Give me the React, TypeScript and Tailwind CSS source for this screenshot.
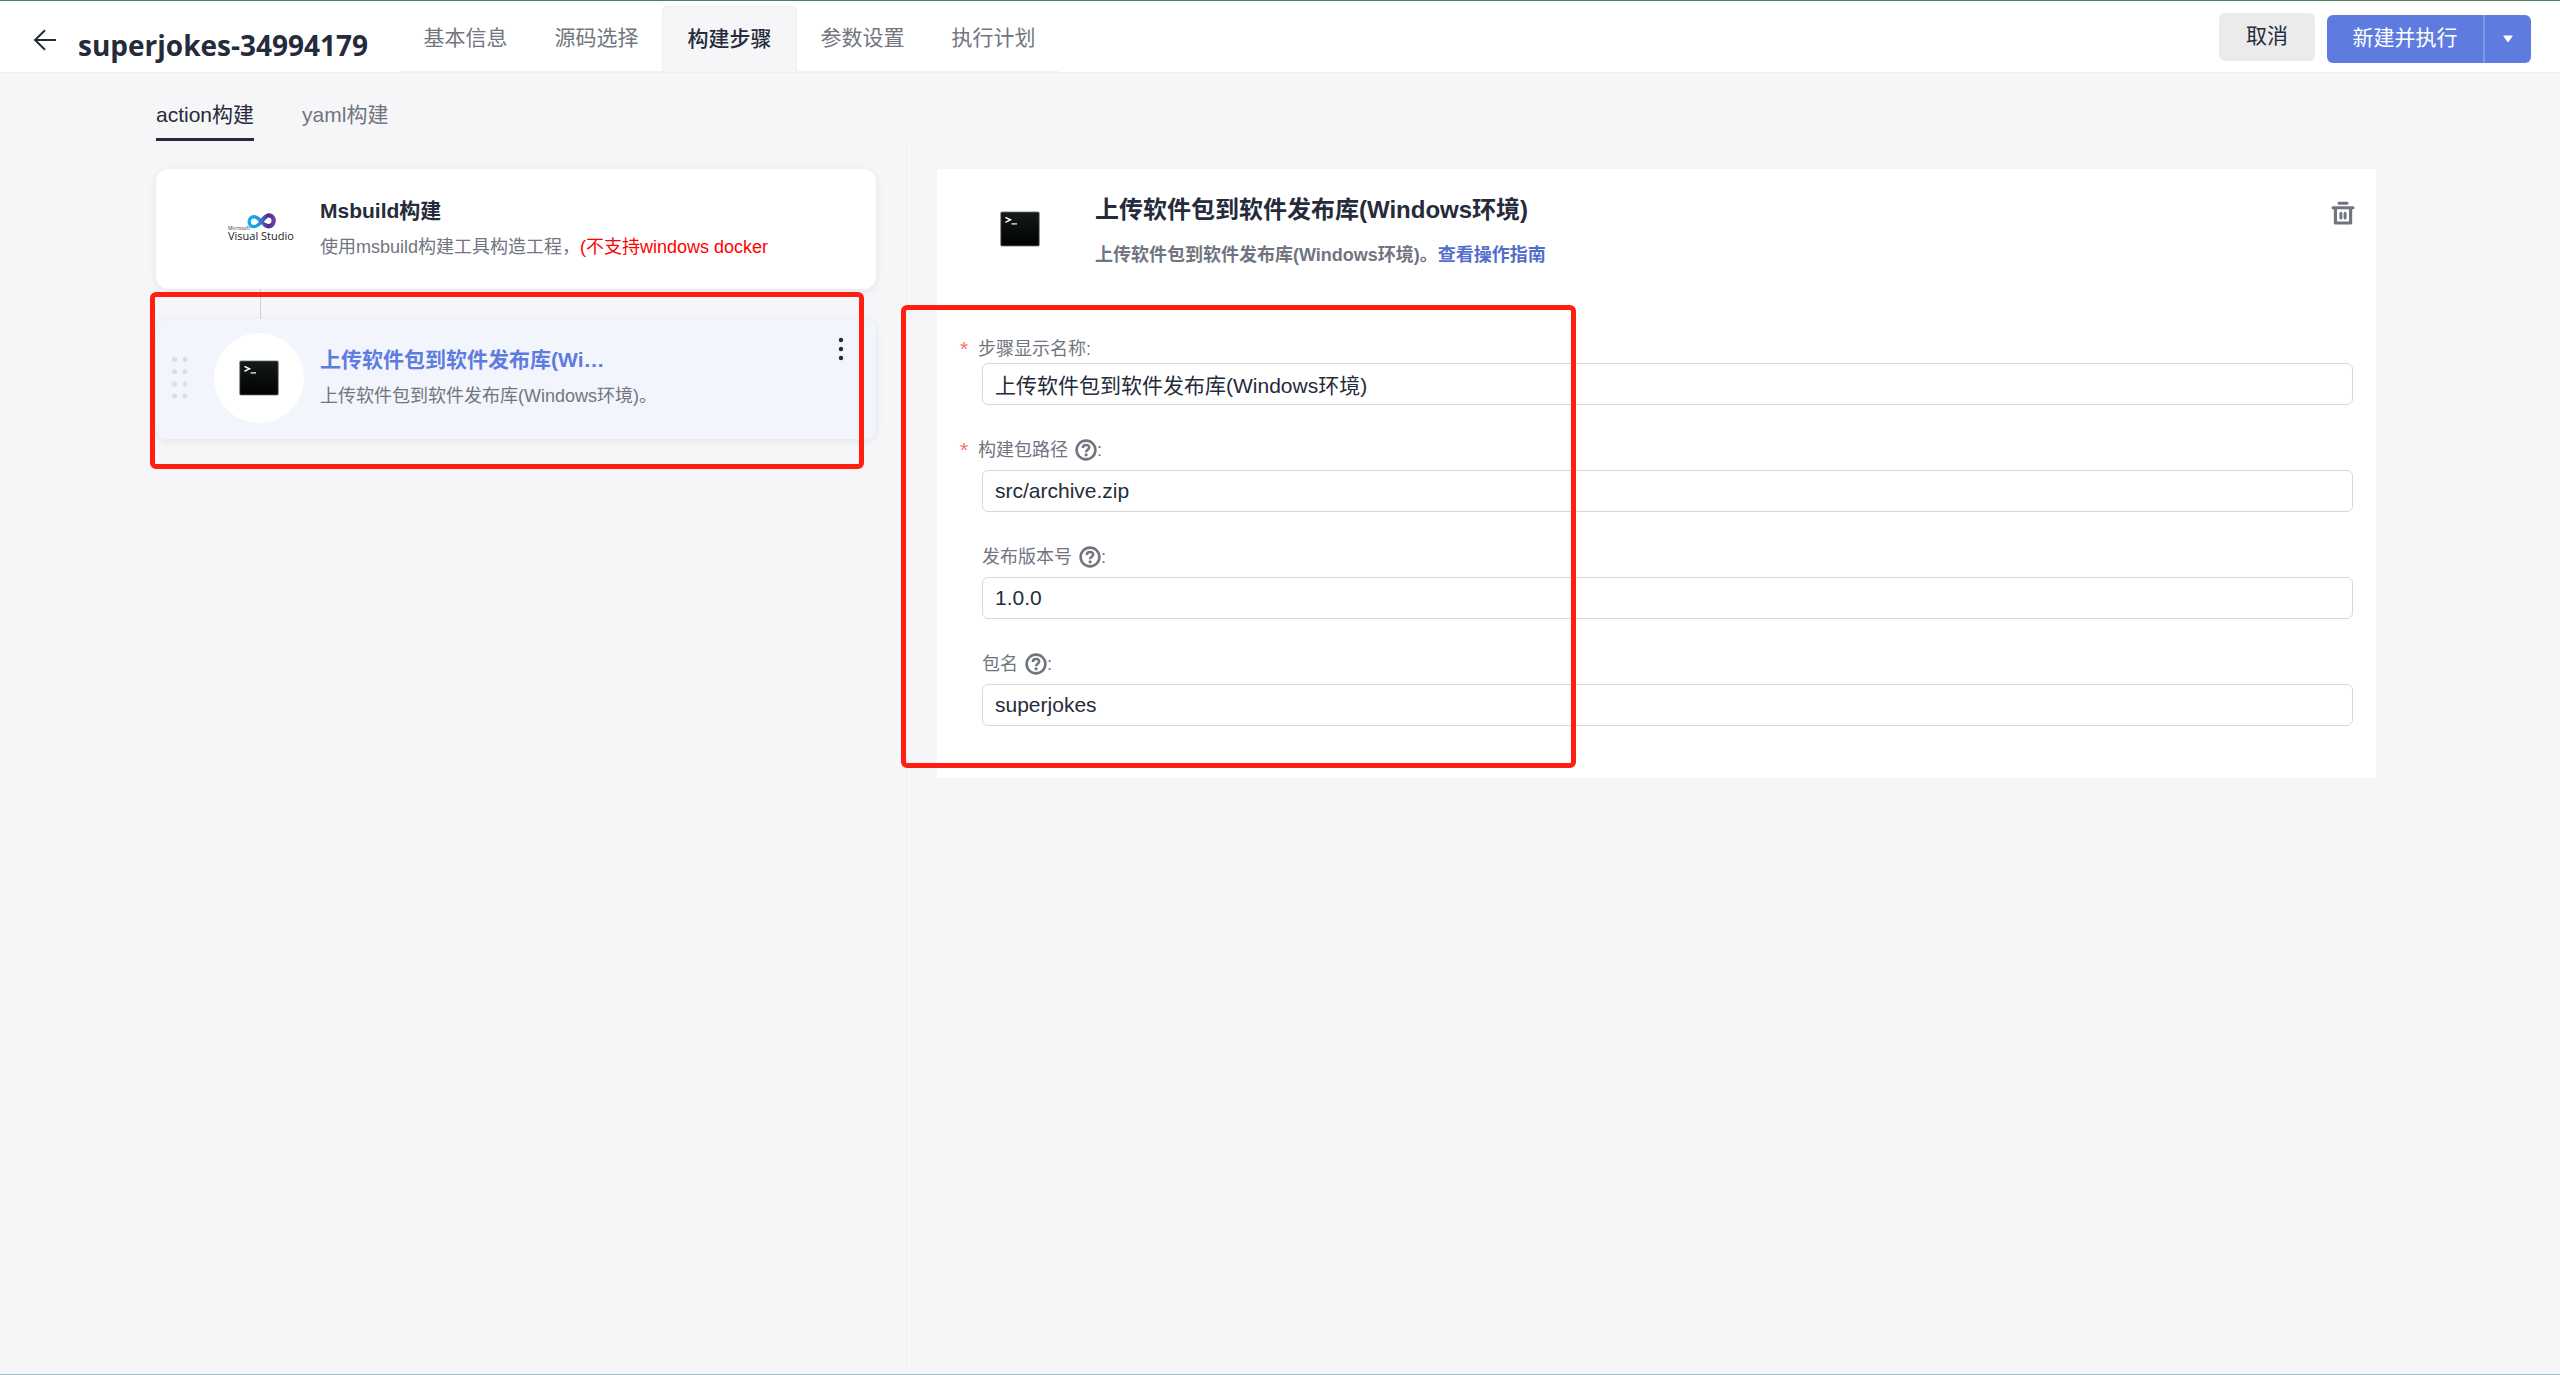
import { ReactNode, useState } from "react";
import clsx from "clsx";

const steps = ["基本信息", "源码选择", "构建步骤", "参数设置", "执行计划"];

const fields = [
  { id: "stepName", label: "步骤显示名称", value: "上传软件包到软件发布库(Windows环境)", required: true, help: false },
  { id: "packagePath", label: "构建包路径", value: "src/archive.zip", required: true, help: true },
  { id: "version", label: "发布版本号", value: "1.0.0", required: false, help: true },
  { id: "packageName", label: "包名", value: "superjokes", required: false, help: true },
];

const BackIcon = () => (
  <svg width="24" height="24" viewBox="0 0 24 24" fill="none" stroke="currentColor" strokeWidth="2">
    <path d="M23 12H2M12 2.2 2 12l10 9.8" />
  </svg>
);

const TerminalIcon = () => (
  <svg width="40" height="36" viewBox="0 0 40 36">
    <defs>
      <linearGradient id="terminal" x1="0" y1="0" x2="0" y2="1">
        <stop offset="0" stopColor="#161a1b" />
        <stop offset="1" stopColor="#000000" />
      </linearGradient>
    </defs>
    <rect x="0.7" y="0.9" width="38.6" height="34.2" rx="1.2" fill="url(#terminal)" stroke="#7f8b89" strokeWidth="0.8" />
    <path d="M5.4 6.4 10.4 8.8 5.4 11.3" fill="none" stroke="#ffffff" strokeWidth="1.5" />
    <path d="M11.5 12.9h5.5" stroke="#ffffff" strokeWidth="1.2" />
  </svg>
);

const VisualStudioLogo = () => (
  <svg width="74" height="34" viewBox="-5 1 74 34" fontFamily="'Open Sans', sans-serif">
    <defs>
      <linearGradient id="vsLoop" gradientUnits="userSpaceOnUse" x1="20" y1="0" x2="49" y2="0">
        <stop offset="0" stopColor="#0db4ea" />
        <stop offset="0.35" stopColor="#1c9fe0" />
        <stop offset="0.55" stopColor="#4a5db8" />
        <stop offset="0.75" stopColor="#52298c" />
        <stop offset="1" stopColor="#7049ac" />
      </linearGradient>
    </defs>
    <g fill="none" stroke="url(#vsLoop)">
      <path
        strokeWidth="3.4"
        d="M34.5 10.5C31.800 13.800 29.800 15.600 27 15.600c-2.900 0-4.800-2-4.800-4.900s2-4.900 4.800-4.900c2.600 0 4.400 1.600 7 4.400 2.600 2.900 4.700 5.200 7.800 5.200"
      />
      <path
        strokeWidth="4.4"
        d="M33 12.400c3.400-4.400 5.400-8 8.700-8 3.200 0 5 2.300 5 5.200 0 3.200-1.900 5.600-5 5.600-1.700 0-3.200-.8-4.400-1.900"
      />
    </g>
    <text x="1" y="19" fontSize="5" fill="#333333">Microsoft</text>
    <text x="1" y="29" fontSize="11" fill="#222222">Visual Studio</text>
  </svg>
);

const HelpIcon = () => (
  <svg width="22" height="22" viewBox="0 0 22 22" fill="none" stroke="#71757f">
    <circle cx="11" cy="11" r="9.4" strokeWidth="2.6" />
    <path d="M7.8 8.900c0-1.900 1.300-3 3.200-3s3.200 1.100 3.200 2.700c0 2.100-3.100 2.300-3.100 4.600" strokeWidth="2.5" />
    <circle cx="11.1" cy="15.8" r="1.6" fill="#71757f" stroke="none" />
  </svg>
);

const TrashIcon = () => (
  <svg width="24" height="24" viewBox="0 0 24 24" fill="none" stroke="#71757f">
    <path d="M8 2.300h8" strokeWidth="3" strokeLinecap="round" />
    <path d="M2 6.800h20" strokeWidth="3" strokeLinecap="round" />
    <path d="M4.400 7v15h15.200V7" strokeWidth="3.2" strokeLinejoin="round" />
    <path d="M9.900 12.200v4.800M14.100 12.200v4.800" strokeWidth="3" strokeLinecap="round" />
  </svg>
);

const DragHandle = () => (
  <svg width="16" height="42" viewBox="0 0 16 42" fill="#dcdde0">
    {[2.5, 14.5, 27, 39].map((y) => (
      <g key={y}>
        <circle cx="2.5" cy={y} r="2.5" />
        <circle cx="13" cy={y} r="2.5" />
      </g>
    ))}
  </svg>
);

const Highlight = ({ className }: { className: string }) => (
  <div className={clsx("pointer-events-none absolute rounded-md border-5 border-[#ff1f10]", className)} />
);

type StepCardProps = {
  icon: ReactNode;
  title: string;
  active?: boolean;
  children: ReactNode;
};

const StepCard = ({ icon, title, active, children }: StepCardProps) => (
  <div
    className={clsx(
      "relative flex h-[120px] items-center rounded-xl pl-4 shadow-[0_2px_8px_rgba(37,43,58,0.08)]",
      active ? "bg-[#f2f5fc] pb-0.5" : "bg-white"
    )}
  >
    <div className="w-[42px]">{active && <DragHandle />}</div>
    <div className="flex h-[90px] w-[90px] shrink-0 items-center justify-center rounded-full bg-white">{icon}</div>
    <div className="ml-4 min-w-0">
      <h3 className={clsx("w-[290px] truncate text-[21px] leading-9 font-bold", active && "text-[#5e7ce0]")}>
        {title}
      </h3>
      <p className="truncate text-lg leading-9 text-[#71757f]">{children}</p>
    </div>
    {active && (
      <button type="button" aria-label="更多" className="absolute top-[18px] right-7 flex h-6 w-3.5 items-center justify-center">
        <svg width="6" height="24" viewBox="0 0 6 24" fill="#252b3a">
          <circle cx="3" cy="3" r="2.2" />
          <circle cx="3" cy="12" r="2.2" />
          <circle cx="3" cy="21" r="2.2" />
        </svg>
      </button>
    )}
  </div>
);

const Header = () => (
  <header className="flex h-[73px] items-stretch border-t border-b border-t-[#4b8462] border-b-[#efeff0] bg-white">
    <div className="flex w-[400px] items-center pl-[33px]">
      <button type="button" aria-label="返回" className="mt-1.5">
        <BackIcon />
      </button>
      <h1 className="mt-4 ml-[21px] font-['Open_Sans'] text-[28px] leading-9 font-bold">superjokes-34994179</h1>
    </div>
    <nav className="flex items-end">
      {steps.map((step) => {
        const active = step === "构建步骤";
        return (
          <a
            key={step}
            href="#"
            className={clsx(
              "flex h-[66px] justify-center pt-4 text-[21px] leading-8",
              active
                ? "w-[135px] rounded-t-md border border-b-0 border-[#f0f0f1] bg-[#f6f6f9] font-medium"
                : "w-[131px] border-b border-[#f2f2f2] text-[#71757f]"
            )}
          >
            {step}
          </a>
        );
      })}
    </nav>
    <div className="mr-[29px] ml-auto flex items-start gap-3 pt-3 text-[21px]">
      <button type="button" className="h-12 w-24 rounded-md bg-[#ebebeb] pb-0.5">
        取消
      </button>
      <div className="mt-0.5 flex h-12 overflow-hidden rounded-md bg-[#5e7ce0] text-white">
        <button type="button" className="w-[158px] border-r-2 border-[#7e96e6] pb-0.5">
          新建并执行
        </button>
        <button type="button" aria-label="更多操作" className="flex w-[46px] items-center justify-center">
          <svg width="10" height="8" viewBox="0 0 10 8" fill="currentColor">
            <path d="M1 .5h8q1 0 .4.9L5.800 6.600q-.8 1-1.600 0L.6 1.400Q0 .5 1 .5z" />
          </svg>
        </button>
      </div>
    </div>
  </header>
);

const App = () => {
  const [values, setValues] = useState<Record<string, string>>(
    Object.fromEntries(fields.map((field) => [field.id, field.value]))
  );

  return (
    <div className="flex min-h-screen flex-col border-b border-[#a5bec5] bg-[#f6f6f9] font-['Liberation_Sans','Noto_Sans_CJK_SC',sans-serif] text-[#252b3a]">
      <Header />

      {/* Editor mode */}
      <nav className="flex h-[68px] items-stretch gap-12 pl-[156px] text-[21px] leading-8">
        <a href="#" className="border-b-3 border-[#252b3a] pt-[26px]">
          action构建
        </a>
        <a href="#" className="pt-[26px] text-[#71757f]">
          yaml构建
        </a>
      </nav>

      <main className="flex grow">
        {/* Step list */}
        <section className="w-[907px] shrink-0 border-r border-[#f0f0f3] pt-7 pr-[30px] pl-[156px]">
          <StepCard title="Msbuild构建" icon={<VisualStudioLogo />}>
            使用msbuild构建工具构造工程，<span className="text-[#ff0000]">(不支持windows docker</span>
          </StepCard>
          <div className="ml-[104px] h-[30px] w-px bg-[#d0d2d6]" />
          <div className="relative">
            <StepCard title="上传软件包到软件发布库(Windows环境)" icon={<TerminalIcon />} active>
              上传软件包到软件发布库(Windows环境)。
            </StepCard>
            <Highlight className="-top-[27px] right-3 -bottom-[30px] -left-1.5" />
          </div>
        </section>

        {/* Step details */}
        <section className="grow pt-7 pr-46 pl-[30px]">
          <div className="relative bg-white pb-[52px]">
            <div className="flex h-[164px] items-start pt-[22px] pr-[21px]">
              <div className="mt-5 ml-[63px]">
                <TerminalIcon />
              </div>
              <div className="ml-[55px]">
                <h2 className="text-2xl leading-[38px] font-bold">上传软件包到软件发布库(Windows环境)</h2>
                <p className="mt-2 text-lg leading-9 font-bold text-[#71757f]">
                  上传软件包到软件发布库(Windows环境)。
                  <a href="#" className="text-[#526ecc]">
                    查看操作指南
                  </a>
                </p>
              </div>
              <button type="button" aria-label="删除" className="mt-2.5 ml-auto">
                <TrashIcon />
              </button>
            </div>

            <form className="flex flex-col gap-[23px] pr-[23px]">
              {fields.map((field) => (
                <div key={field.id}>
                  <label
                    htmlFor={field.id}
                    className={clsx(
                      "flex items-center pt-0.5 text-lg text-[#71757f]",
                      field.help ? "h-[42px]" : "h-[30px]",
                      field.required ? "pl-[23px]" : "pl-[45px]"
                    )}
                  >
                    {field.required && <span className="w-[18px] text-[21px] text-[#f66f6a]">*</span>}
                    {field.label}
                    {field.help && (
                      <span className="ml-[7px]">
                        <HelpIcon />
                      </span>
                    )}
                    :
                  </label>
                  <div className="pl-[45px]">
                    <input
                      id={field.id}
                      type="text"
                      value={values[field.id]}
                      onChange={(e) => setValues({ ...values, [field.id]: e.target.value })}
                      className="h-[42px] w-full rounded-md border border-[#d7d8da] bg-white px-3 text-[21px]"
                    />
                  </div>
                </div>
              ))}
            </form>
            <Highlight className="top-[136px] bottom-2.5 -left-9 w-[675px]" />
          </div>
        </section>
      </main>
    </div>
  );
};

export default App;
